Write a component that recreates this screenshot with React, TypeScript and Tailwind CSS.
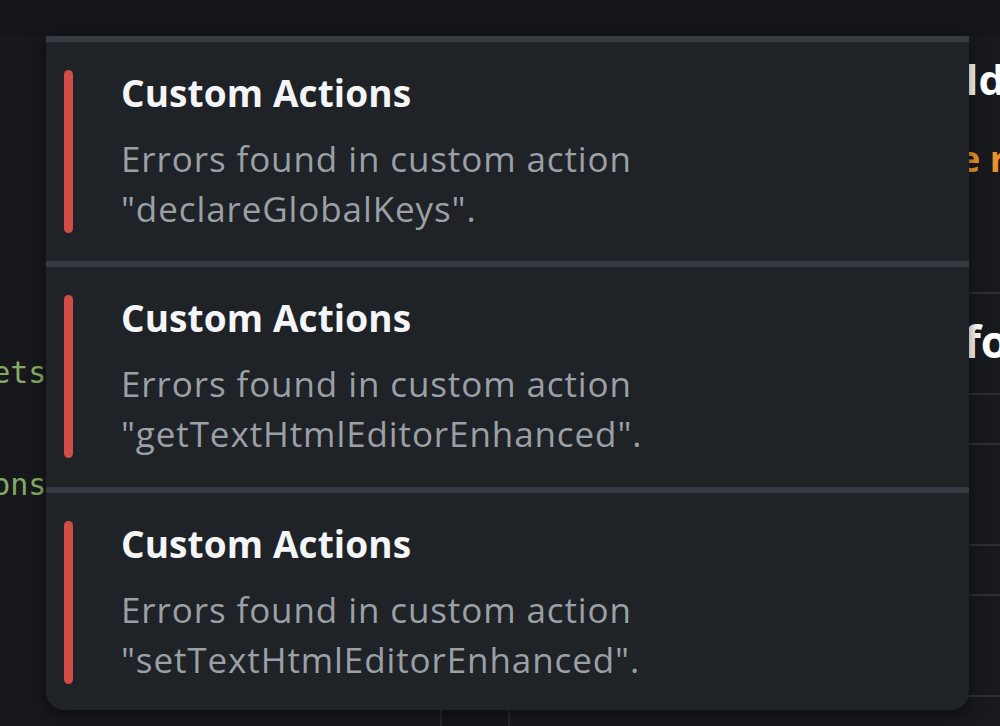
const items = [
  { id: 1, title: 'Custom Actions', action: 'declareGlobalKeys' },
  { id: 2, title: 'Custom Actions', action: 'getTextHtmlEditorEnhanced' },
  { id: 3, title: 'Custom Actions', action: 'setTextHtmlEditorEnhanced' },
];

const sans = { fontFamily: '"Open Sans", "Noto Sans", sans-serif' };

const ErrorItem = ({ title, action, last }: { title: string; action: string; last?: boolean }) => (
  <div
    className={`flex border-t-[6px] border-[#353a43] pt-[28px] ${last ? 'h-[224px]' : 'h-[226px]'}`}
  >
    <div className="ml-[18px] w-[9px] h-[163px] rounded-full bg-[#d24c46]" />
    <div className="ml-[48px] mt-[3px] flex flex-col">
      <div className="text-[37px] leading-[40px] font-bold tracking-[0.1px] text-[#f4f5f6]">{title}</div>
      <div className="mt-[21px] text-[35px] leading-[50px] tracking-[0.9px] text-[#9aa0a6]">
        Errors found in custom action
        <br />"{action}".
      </div>
    </div>
  </div>
);

export default function App() {
  return (
    <div className="relative w-[1000px] h-[726px] overflow-hidden bg-[#141619] flex flex-col" style={sans}>
      {/* background page */}
      <div className="h-[36px] bg-[#141619]" />
      <div className="flex flex-1">
        <div
          className="w-[440px] bg-[#16181b] pt-[309px] text-[30px] leading-[56px] text-[#87a866]"
          style={{ fontFamily: '"DejaVu Sans Mono", monospace' }}
        >
          <div className="-ml-[80px] whitespace-pre">widgets</div>
          <div className="-ml-[80px] whitespace-pre">{'\u00a0'}</div>
          <div className="-ml-[80px] whitespace-pre">actions</div>
        </div>
        <div className="w-[68px] border-l-2 border-[#25282c]" />
        <div className="flex-1 border-l-2 border-[#25282c] bg-[#17191c] flex flex-col">
          <div className="h-[18px]" />
          <div className="h-[50px] flex justify-end -mr-[5px] text-[42px] leading-[50px] font-bold text-white whitespace-nowrap">
            Build
          </div>
          <div className="h-[33px]" />
          <div className="h-[44px] flex justify-end -mr-[6px] text-[36px] leading-[44px] font-bold text-[#e8922f] whitespace-nowrap">
            the r
          </div>
          <div className="h-[113px] border-b-2 border-[#2c3036]" />
          <div className="h-[101px] pt-[22px] border-b-2 border-[#2c3036] flex justify-end -mr-[8px] text-[44px] leading-[50px] font-bold text-white whitespace-nowrap">
            Info
          </div>
          <div className="h-[50px] border-b-2 border-[#2c3036]" />
          <div className="h-[101px] border-b-2 border-[#2c3036]" />
          <div className="h-[50px] border-b-2 border-[#2c3036]" />
          <div className="h-[101px] border-b-2 border-[#2c3036]" />
        </div>
      </div>

      {/* notification panel */}
      <div className="absolute left-[46px] top-[36px] w-[923px] h-[674px] flex flex-col bg-[#1f2226] rounded-b-[18px] overflow-hidden shadow-[0_4px_16px_rgba(0,0,0,0.5)]">
        {items.map((it, i) => (
          <ErrorItem key={it.id} title={it.title} action={it.action} last={i === items.length - 1} />
        ))}
      </div>
    </div>
  );
}
